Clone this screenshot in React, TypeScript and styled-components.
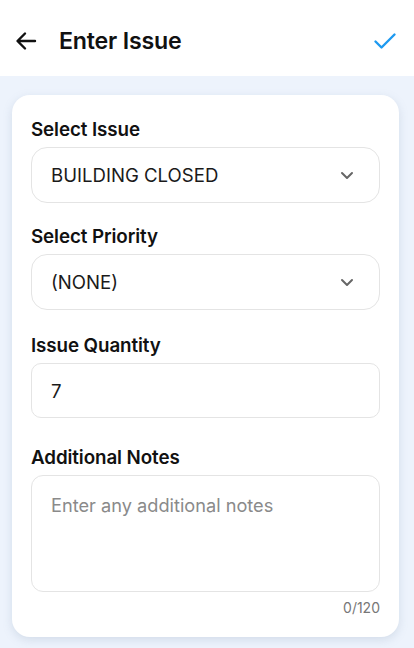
import React from "react";
import styled, { createGlobalStyle } from "styled-components";

const Global = createGlobalStyle`
  html, body { margin: 0; padding: 0; background: #edf3fc; }
  body { font-family: Inter, "Noto Sans", sans-serif; -webkit-font-smoothing: antialiased; }
  * { box-sizing: border-box; }
`;

const Page = styled.div`
  width: 414px;
  height: 648px;
  background: #edf3fc;
  display: flex;
  flex-direction: column;
  overflow: hidden;
`;

const Header = styled.header`
  height: 76px;
  background: #ffffff;
  display: flex;
  align-items: center;
  padding: 6px 16px 0 13px;
  flex-shrink: 0;
`;

const IconButton = styled.button`
  border: 0;
  background: transparent;
  padding: 0;
  width: 26px;
  height: 26px;
  display: flex;
  align-items: center;
  justify-content: center;
  cursor: pointer;
`;

const Title = styled.h1`
  margin: 0 0 0 20px;
  font-size: 23.2px;
  font-weight: 600;
  color: #111111;
  flex: 1;
  letter-spacing: -0.2px;
`;

const Body = styled.main`
  padding: 19px 15px 0 12px;
`;

const Card = styled.section`
  background: #ffffff;
  border-radius: 18px;
  box-shadow: 0 3px 10px rgba(120, 140, 170, 0.22);
  padding: 23px 19px 21px 19px;
  display: flex;
  flex-direction: column;
`;

const Field = styled.div<{ $gap?: number }>`
  display: flex;
  flex-direction: column;
  margin-bottom: ${(p) => p.$gap ?? 22}px;
`;

const Label = styled.label`
  font-size: 18.8px;
  font-weight: 600;
  color: #111111;
  line-height: 23px;
  margin-bottom: 6px;
  letter-spacing: -0.1px;
`;

const Box = styled.div<{ $height?: number }>`
  height: ${(p) => p.$height ?? 56}px;
  border: 1px solid #e4e4e4;
  border-radius: 12px;
  display: flex;
  align-items: ${(p) => (p.$height && p.$height > 60 ? "flex-start" : "center")};
  padding: ${(p) => (p.$height && p.$height > 60 ? "18px 19px" : "0 25px 0 19px")};
  font-size: 18.6px;
  color: #1a1a1a;
`;

const SelectBox = styled(Box)`
  justify-content: space-between;
  border-radius: 16px;
`;

const QtyBox = styled(Box)`
  border-radius: 10px;
`;

const Placeholder = styled.span`
  color: #8a8a8a;
  font-size: 18.2px;
`;

const Counter = styled.div`
  align-self: flex-end;
  font-size: 14px;
  color: #777777;
  margin-top: 7px;
`;

const Chevron = () => (
  <svg width="14" height="9" viewBox="0 0 14 9">
    <path d="M2 2 L7 7 L12 2" fill="none" stroke="#666" strokeWidth="2" strokeLinecap="round" strokeLinejoin="round" />
  </svg>
);

export default function App() {
  return (
    <Page>
      <Global />
      <Header>
        <IconButton aria-label="back">
          <svg width="24" height="24" viewBox="0 0 24 24">
            <path d="M21 12 H4 M11 4.5 L3.5 12 L11 19.5" fill="none" stroke="#111" strokeWidth="2.4" strokeLinecap="round" strokeLinejoin="round" />
          </svg>
        </IconButton>
        <Title>Enter Issue</Title>
        <IconButton aria-label="done">
          <svg width="26" height="26" viewBox="0 0 26 26">
            <path d="M3.5 13.5 L9.5 19.5 L22.5 6.5" fill="none" stroke="#1e9af0" strokeWidth="2.4" strokeLinecap="round" strokeLinejoin="round" />
          </svg>
        </IconButton>
      </Header>
      <Body>
        <Card>
          <Field $gap={22}>
            <Label>Select Issue</Label>
            <SelectBox>
              <span>BUILDING CLOSED</span>
              <Chevron />
            </SelectBox>
          </Field>
          <Field $gap={24}>
            <Label>Select Priority</Label>
            <SelectBox>
              <span>(NONE)</span>
              <Chevron />
            </SelectBox>
          </Field>
          <Field $gap={28}>
            <Label>Issue Quantity</Label>
            <QtyBox $height={55}>7</QtyBox>
          </Field>
          <Field $gap={0}>
            <Label>Additional Notes</Label>
            <Box $height={117}>
              <Placeholder>Enter any additional notes</Placeholder>
            </Box>
            <Counter>0/120</Counter>
          </Field>
        </Card>
      </Body>
    </Page>
  );
}
